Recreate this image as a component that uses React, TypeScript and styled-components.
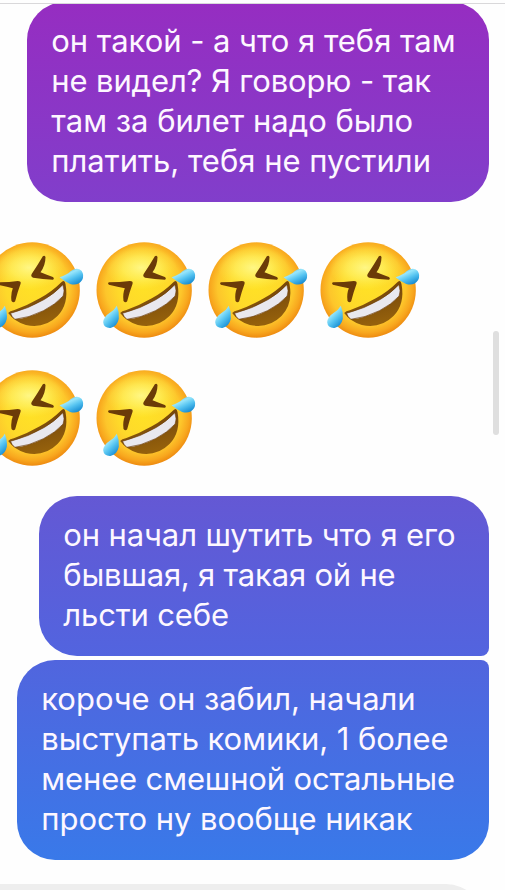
import React from "react";
import styled, { createGlobalStyle } from "styled-components";

const GlobalStyle = createGlobalStyle`
  body {
    margin: 0;
    background: #fefefe;
  }
`;

const Screen = styled.main`
  position: relative;
  box-sizing: border-box;
  width: 505px;
  height: 890px;
  overflow: hidden;
  display: flex;
  flex-direction: column;
  background: #fefefe;
  font-family: Inter, "Noto Sans", sans-serif;
`;

const HeaderEdge = styled.header`
  flex: none;
  height: 3px;
  border-bottom: 1px solid #d9d8da;
`;

const Thread = styled.section`
  flex: 1;
  min-height: 0;
  overflow: hidden;
  display: flex;
  flex-direction: column;
  align-items: flex-end;
  padding-right: 16px;
`;

const Bubble = styled.article<{
  $width: number;
  $from: string;
  $to: string;
  $radius: string;
  $gap?: number;
}>`
  flex: none;
  box-sizing: border-box;
  width: ${(p) => p.$width}px;
  margin-top: ${(p) => p.$gap ?? 0}px;
  padding: 19px 0 21px 24.3px;
  border-radius: ${(p) => p.$radius};
  background: linear-gradient(${(p) => p.$from}, ${(p) => p.$to});
  color: #fdf7ff;
`;

const Line = styled.span<{ $spacing: number }>`
  display: block;
  font-size: 31px;
  line-height: 40px;
  white-space: nowrap;
  letter-spacing: ${(p) => p.$spacing}px;
`;

const EmojiRows = styled.div`
  flex: none;
  align-self: flex-start;
  margin: 24px 0 14px -24px;
  height: 256px;
`;

const EmojiRow = styled.div`
  display: flex;
  height: 128px;
`;

const EmojiSvg = styled.svg`
  display: block;
  flex: none;
  width: 112px;
  height: 128px;
  overflow: visible;
`;

const DefsSvg = styled.svg`
  position: absolute;
`;

const Incoming = styled.article`
  flex: none;
  align-self: flex-start;
  width: 484px;
  height: 80px;
  margin-top: 24px;
  border-radius: 0 38px 38px 0;
  background: #eeeeee;
`;

const ScrollThumb = styled.div`
  position: absolute;
  top: 331px;
  right: 6px;
  width: 6px;
  height: 104px;
  border-radius: 3px;
  background: #dfdfdf;
`;

const EmojiDefs = () => (
  <DefsSvg width="0" height="0" aria-hidden="true">
    <defs>
      <radialGradient id="face" gradientUnits="userSpaceOnUse" cx="147" cy="156" r="152">
        <stop offset="0" stopColor="#ffe126" />
        <stop offset="0.5" stopColor="#fed92a" />
        <stop offset="0.75" stopColor="#fdc62b" />
        <stop offset="0.9" stopColor="#f8a71e" />
        <stop offset="1" stopColor="#ee8b10" />
      </radialGradient>
      <radialGradient id="gloss">
        <stop offset="0" stopColor="#fffa90" stopOpacity="0.9" />
        <stop offset="0.5" stopColor="#fff66c" stopOpacity="0.6" />
        <stop offset="1" stopColor="#ffee50" stopOpacity="0" />
      </radialGradient>
      <linearGradient id="mouth" x1="0" y1="0" x2="0.3" y2="1">
        <stop offset="0" stopColor="#6d3b05" />
        <stop offset="0.55" stopColor="#80500b" />
        <stop offset="1" stopColor="#94600c" />
      </linearGradient>
      <linearGradient id="tear" x1="0" y1="0" x2="0.7" y2="1">
        <stop offset="0" stopColor="#2b9ddd" />
        <stop offset="0.4" stopColor="#98e6fb" />
        <stop offset="0.65" stopColor="#56c4f1" />
        <stop offset="1" stopColor="#168bd2" />
      </linearGradient>
    </defs>
  </DefsSvg>
);

const RollingLaugh = () => (
  <EmojiSvg viewBox="0 0 112 128" role="img" aria-label="🤣">
    <g transform="translate(6.5 9) scale(0.33333)">
      <circle cx="149" cy="165" r="143" fill="url(#face)" />
      <ellipse cx="140" cy="98" rx="108" ry="66" fill="url(#gloss)" />
      <path
        d="M43 142 Q76 142 106 138 Q117 138 114 147 Q105 171 98 199 Q93 205 87 198 Q84 177 91 160 Q71 155 43 149 Q38 145 43 142Z"
        fill="#6b3b08"
      />
      <path
        d="M181 64 Q186 60 189 66 Q189 91 174 112 Q191 119 211 126 Q217 131 211 134 Q181 133 152 128 Q143 124 148 116 Q166 90 181 64Z"
        fill="#6b3b08"
      />
      <path
        d="M77 234 Q82 228 94 226 Q132 213 172 190 Q210 168 235 143 Q246 132 249 147 Q260 207 225 243 Q186 282 130 270 Q96 260 77 234Z"
        fill="url(#mouth)"
      />
      <path
        d="M84 235 Q138 221 186 193 Q218 174 241 149 Q248 168 242 183 Q220 208 183 227 Q139 249 97 253 Q88 246 84 235Z"
        fill="#e9e8ee"
        stroke="#6a3908"
        strokeWidth="2"
      />
      <path
        d="M231 127 Q253 120 265 108 Q284 95 297 107 Q306 120 299 135 Q287 153 263 147 Q247 140 231 127Z"
        fill="url(#tear)"
      />
      <path
        d="M67 212 Q75 231 73 251 Q68 274 48 279 Q28 280 26 262 Q27 245 46 233 Q60 225 67 212Z"
        fill="url(#tear)"
      />
    </g>
  </EmojiSvg>
);

type LineData = [text: string, spacing: number];

const first: LineData[] = [
  ["он такой - а что я тебя там", -0.04],
  ["не видел? Я говорю - так", -0.13],
  ["там за билет надо было", 0],
  ["платить, тебя не пустили", 0],
];
const second: LineData[] = [
  ["он начал шутить что я его", -0.12],
  ["бывшая, я такая ой не", -0.2],
  ["льсти себе", -0.15],
];
const third: LineData[] = [
  ["короче он забил, начали", -0.03],
  ["выступать комики, 1 более", -0.07],
  ["менее смешной остальные", -0.14],
  ["просто ну вообще никак", -0.05],
];

const Lines = ({ lines }: { lines: LineData[] }) => (
  <>
    {lines.map(([text, spacing]) => (
      <Line key={text} $spacing={spacing}>
        {text}
      </Line>
    ))}
  </>
);

export default function App() {
  return (
    <>
      <GlobalStyle />
      <EmojiDefs />
      <Screen>
        <HeaderEdge />
        <Thread>
          <Bubble $width={462} $gap={-2} $from="#962dc1" $to="#813ecb" $radius="38px">
            <Lines lines={first} />
          </Bubble>
          <EmojiRows>
            <EmojiRow>
              {[0, 1, 2, 3].map((i) => (
                <RollingLaugh key={i} />
              ))}
            </EmojiRow>
            <EmojiRow>
              {[0, 1].map((i) => (
                <RollingLaugh key={i} />
              ))}
            </EmojiRow>
          </EmojiRows>
          <Bubble $width={450} $from="#6458d4" $to="#5264df" $radius="38px 38px 8px 38px">
            <Lines lines={second} />
          </Bubble>
          <Bubble $width={472} $gap={4} $from="#5165de" $to="#3979e9" $radius="38px 8px 38px 38px">
            <Lines lines={third} />
          </Bubble>
          <Incoming />
        </Thread>
        <ScrollThumb />
      </Screen>
    </>
  );
}
